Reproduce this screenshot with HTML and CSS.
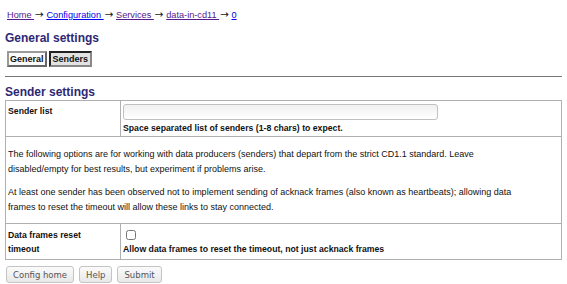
FILE: index.html
```html
<!DOCTYPE html>
<html lang="en">

<head>
    <meta charset="UTF-8">
    <title>data-in-cd11 - Senders</title>
    <link rel="stylesheet" href="styles.css">
</head>

<body>
    <div class="crumbs">
        <a class="seen" href="#">Home </a><span class="arrow">&rarr;</span>
        <a href="#">Configuration </a><span class="arrow">&rarr;</span>
        <a class="seen" href="#">Services </a><span class="arrow">&rarr;</span>
        <a class="seen" href="#">data-in-cd11 </a><span class="arrow">&rarr;</span>
        <a href="#">0</a>
    </div>

    <h2>General settings</h2>
    <div class="tabs">
        <button class="tab">General</button>
        <button class="tab active">Senders</button>
    </div>

    <hr>

    <h2>Sender settings</h2>
    <table class="settings">
        <tr>
            <th>Sender list</th>
            <td>
                <input type="text" class="text-field">
                <div class="hint">Space separated list of senders (1-8 chars) to expect.</div>
            </td>
        </tr>
        <tr>
            <td colspan="2" class="note">
                <p>The following options are for working with data producers (senders) that depart from the strict CD1.1 standard. Leave disabled/empty for best results, but experiment if problems arise.</p>
                <p>At least one sender has been observed not to implement sending of acknack frames (also known as heartbeats); allowing data frames to reset the timeout will allow these links to stay connected.</p>
            </td>
        </tr>
        <tr class="check-row">
            <th>Data frames reset timeout</th>
            <td>
                <input type="checkbox" class="check">
                <div class="hint">Allow data frames to reset the timeout, not just acknack frames</div>
            </td>
        </tr>
    </table>

    <div class="actions">
        <button class="btn">Config home</button>
        <button class="btn">Help</button>
        <button class="btn">Submit</button>
    </div>
</body>

</html>
```

FILE: styles.css
```css
body {
    font-family: "Liberation Sans", Arial, sans-serif;
    font-size: 9px;
    color: #111;
    margin: 0;
    padding: 8px 5px 0;
    background-color: #fff;
}

a {
    color: #0000ee;
}

a.seen {
    color: #551a8b;
}

.crumbs {
    font-size: 9.2px;
    line-height: 12px;
    margin-left: 2px;
    color: #222;
}

.crumbs .arrow {
    font-family: "DejaVu Sans", sans-serif;
    font-size: 10.5px;
    margin-left: 1px;
}

h2 {
    font-size: 12px;
    line-height: 14px;
    color: #2e2874;
    margin: 10px 0 0;
}

.tabs {
    display: flex;
    gap: 2px;
    margin: 6px 0 0 2px;
}

.tab {
    font-family: "Liberation Sans", Arial, sans-serif;
    font-size: 9px;
    font-weight: bold;
    color: #111;
    background-color: #fafafa;
    border: 2px solid #9a9a9a;
    border-right-color: #666;
    border-bottom-color: #666;
    padding: 0 1px;
    height: 16px;
}

.tab.active {
    background-color: #e2e2e2;
    border-color: #222;
    border-right-color: #888;
    border-bottom-color: #888;
    padding: 0 2px;
}

hr {
    border: none;
    border-top: 1px solid #777;
    margin: 9px 0 0;
}

hr + h2 {
    margin-top: 8px;
}

.settings {
    width: 100%;
    border-collapse: collapse;
    border: 1px solid #b0b0b0;
    margin-top: 1px;
}

.settings th,
.settings td {
    border: 1px solid #b0b0b0;
    vertical-align: top;
    text-align: left;
    padding: 3px 2px 2px;
}

.settings th {
    width: 96px;
    padding-right: 16px;
    font-size: 8.7px;
    font-weight: bold;
    line-height: 14px;
}

.text-field {
    display: block;
    width: 315px;
    height: 16px;
    box-sizing: border-box;
    border: 1px solid #c0c0c0;
    border-radius: 3px;
    background: linear-gradient(#f0f0f0, #fff);
    margin: 0 0 2px;
}

.hint {
    font-size: 8.7px;
    font-weight: bold;
    line-height: 12px;
}

.settings .note {
    padding: 10px 33px 8px 2px;
}

.note p {
    font-size: 9px;
    line-height: 15px;
    margin: 0 0 8px;
}

.note p:last-child {
    margin-bottom: 0;
}

.settings .check-row th,
.settings .check-row td {
    padding-top: 4px;
    padding-bottom: 3px;
}

.check {
    display: block;
    margin: 2px 0 3px 3px;
    width: 10px;
    height: 10px;
}

.actions {
    display: flex;
    gap: 5px;
    margin: 6px 1px 0;
}

.btn {
    font-family: "DejaVu Sans", sans-serif;
    font-size: 8.5px;
    color: #555;
    background: linear-gradient(#fbfbfb, #e8e8e8);
    border: 1px solid #c4c4c4;
    border-radius: 3px;
    padding: 0 6px;
    height: 17px;
}
```
